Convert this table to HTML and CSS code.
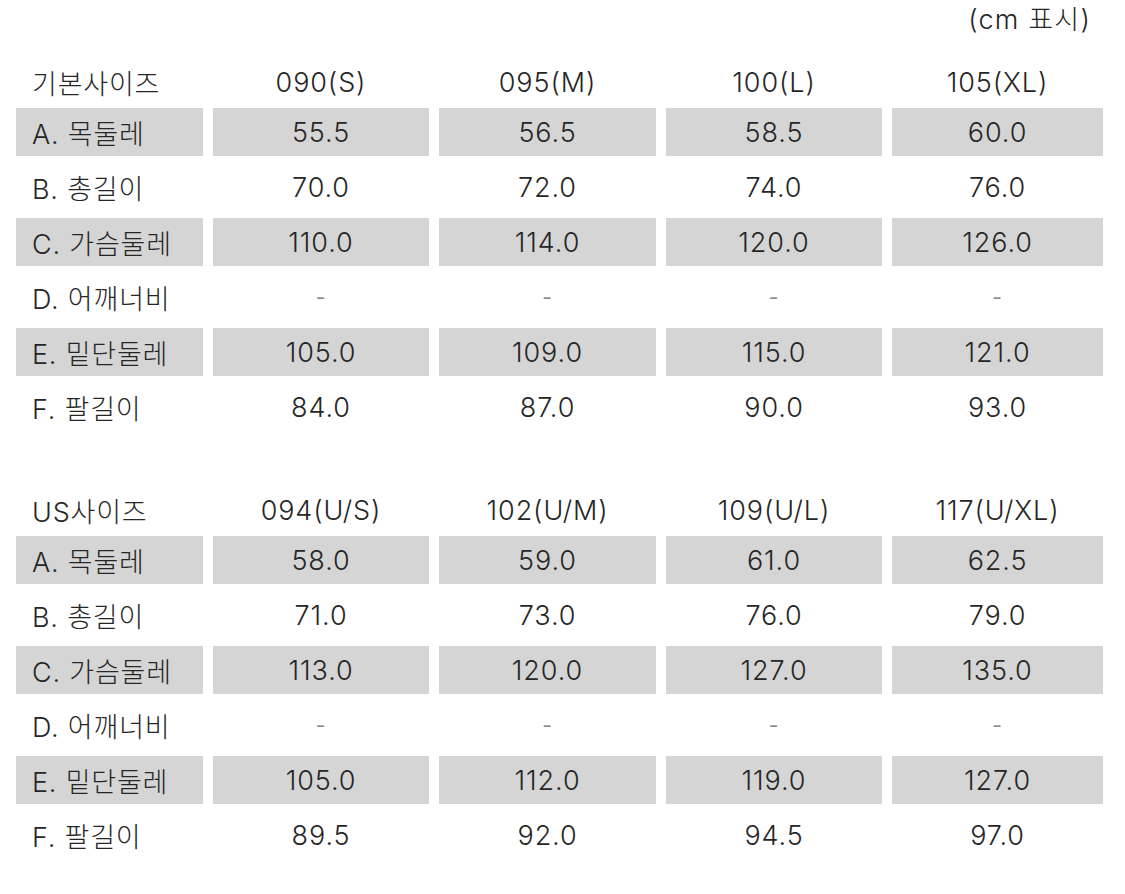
FILE: index.html
```html
<!DOCTYPE html>
<html lang="ko">
<head>
<meta charset="utf-8">
<link rel="stylesheet" href="styles.css">
</head>
<body>
<div class="page">
  <div class="unit">(cm 표시)</div>

  <div class="table">
    <div class="row head"><div class="cell label">기본사이즈</div><div class="cell">090(S)</div><div class="cell">095(M)</div><div class="cell">100(L)</div><div class="cell">105(XL)</div></div>
    <div class="row shade"><div class="cell label">A. 목둘레</div><div class="cell">55.5</div><div class="cell">56.5</div><div class="cell">58.5</div><div class="cell">60.0</div></div>
    <div class="row"><div class="cell label">B. 총길이</div><div class="cell">70.0</div><div class="cell">72.0</div><div class="cell">74.0</div><div class="cell">76.0</div></div>
    <div class="row shade"><div class="cell label">C. 가슴둘레</div><div class="cell">110.0</div><div class="cell">114.0</div><div class="cell">120.0</div><div class="cell">126.0</div></div>
    <div class="row"><div class="cell label">D. 어깨너비</div><div class="cell dash">-</div><div class="cell dash">-</div><div class="cell dash">-</div><div class="cell dash">-</div></div>
    <div class="row shade"><div class="cell label">E. 밑단둘레</div><div class="cell">105.0</div><div class="cell">109.0</div><div class="cell">115.0</div><div class="cell">121.0</div></div>
    <div class="row"><div class="cell label">F. 팔길이</div><div class="cell">84.0</div><div class="cell">87.0</div><div class="cell">90.0</div><div class="cell">93.0</div></div>
  </div>

  <div class="table second">
    <div class="row head"><div class="cell label">US사이즈</div><div class="cell">094(U/S)</div><div class="cell">102(U/M)</div><div class="cell">109(U/L)</div><div class="cell">117(U/XL)</div></div>
    <div class="row shade"><div class="cell label">A. 목둘레</div><div class="cell">58.0</div><div class="cell">59.0</div><div class="cell">61.0</div><div class="cell">62.5</div></div>
    <div class="row"><div class="cell label">B. 총길이</div><div class="cell">71.0</div><div class="cell">73.0</div><div class="cell">76.0</div><div class="cell">79.0</div></div>
    <div class="row shade"><div class="cell label">C. 가슴둘레</div><div class="cell">113.0</div><div class="cell">120.0</div><div class="cell">127.0</div><div class="cell">135.0</div></div>
    <div class="row"><div class="cell label">D. 어깨너비</div><div class="cell dash">-</div><div class="cell dash">-</div><div class="cell dash">-</div><div class="cell dash">-</div></div>
    <div class="row shade"><div class="cell label">E. 밑단둘레</div><div class="cell">105.0</div><div class="cell">112.0</div><div class="cell">119.0</div><div class="cell">127.0</div></div>
    <div class="row"><div class="cell label">F. 팔길이</div><div class="cell">89.5</div><div class="cell">92.0</div><div class="cell">94.5</div><div class="cell">97.0</div></div>
  </div>
</div>
</body>
</html>
```

FILE: styles.css
```css
html, body {
  margin: 0;
  padding: 0;
  background: #ffffff;
}

.page {
  width: 1125px;
  font-family: "Inter", "Noto Sans CJK KR", sans-serif;
  font-size: 27px;
  font-weight: 300;
  color: #262626;
  padding: 0 0 0 16px;
  box-sizing: border-box;
}

.unit {
  height: 40px;
  line-height: 40px;
  text-align: right;
  padding-right: 34px;
  margin-bottom: 13px;
  margin-left: -16px;
  letter-spacing: 1.2px;
}

.table {
  display: flex;
  flex-direction: column;
  gap: 7px;
  width: 1087px;
}

.table.second {
  margin-top: 50px;
}

.row {
  display: grid;
  grid-template-columns: 187px 216px 217px 216px 211px;
  column-gap: 10px;
  height: 48px;
}

.cell {
  display: flex;
  align-items: center;
  justify-content: center;
  height: 48px;
  letter-spacing: 0.9px;
}

.cell.label {
  justify-content: flex-start;
  padding-left: 16px;
  letter-spacing: 0.8px;
}

.head .cell {
  padding-top: 10px;
  box-sizing: border-box;
}

.shade .cell {
  background: #d5d5d5;
}

.dash {
  color: #8a8a8a;
  font-size: 21px;
  font-weight: 400;
}
```
